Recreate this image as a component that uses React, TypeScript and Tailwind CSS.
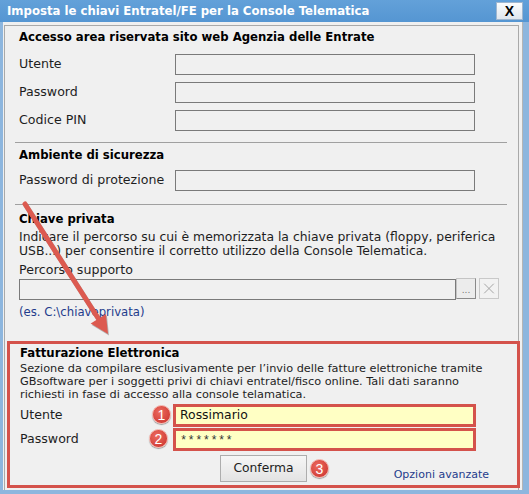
import { X } from 'lucide-react';

const labelText = 'text-[12.6px] text-[#1e1e1e]';
const heading = 'text-[11.7px] font-bold text-black';

function Badge({ n, className }: { n: number; className: string }) {
  return (
    <span
      className={`absolute flex h-[19px] w-[19px] items-center justify-center rounded-full border border-[#f3b0a8] bg-[radial-gradient(circle_at_40%_35%,#ec6a5e,#c9302c)] font-['Liberation_Sans',sans-serif] text-[14px] leading-none text-white shadow-[0_1px_1px_rgba(0,0,0,0.35)] ${className}`}
    >
      {n}
    </span>
  );
}

function FieldRow({ label }: { label: string }) {
  return (
    <div className="flex h-[21px] items-center">
      <span className={`w-[156px] ${labelText}`}>{label}</span>
      <div className="h-[21px] w-[300px] border border-[#7a7a7a] bg-[#f0f0f0]" />
    </div>
  );
}

export default function App() {
  return (
    <div className="relative h-[494px] w-[529px] overflow-hidden bg-[#8db6de] font-['DejaVu_Sans',sans-serif]">
      {/* title bar */}
      <div className="flex h-[22px] items-center justify-between bg-[linear-gradient(#63a1d9,#5596d2)] pl-[7px] pr-[6px]">
        <span className="font-['DejaVu_Sans_Condensed','DejaVu_Sans',sans-serif] text-[13px] font-bold text-white">
          Imposta le chiavi Entratel/FE per la Console Telematica
        </span>
        <button
          type="button"
          className="flex h-[18px] w-[27px] items-center justify-center border border-[#9fb6cf] bg-[linear-gradient(#fbfcfd,#dfe6ee)] font-['Liberation_Sans',sans-serif] text-[14px] font-bold text-black"
        >
          X
        </button>
      </div>

      {/* window body */}
      <div className="ml-[3px] mr-[6px] h-[468px] border-r border-[#b5b5b5] bg-[#f0f0f0] pt-[3px]">
        <div className="ml-[1px] mr-[3px] h-[465px] border-l border-r border-t border-[#a9a9a9] pl-[14px]">
          <div className={`mt-[2px] flex h-[20px] items-center ${heading}`}>
            Accesso area riservata sito web Agenzia delle Entrate
          </div>
          <div className="mt-[6px] flex flex-col gap-[7px]">
            <FieldRow label="Utente" />
            <FieldRow label="Password" />
            <FieldRow label="Codice PIN" />
          </div>

          <div className="-ml-[4px] mt-[11px] h-px w-[492px] bg-[#a0a0a0]" />
          <div className={`mt-[3px] flex h-[20px] items-center ${heading}`}>
            Ambiente di sicurezza
          </div>
          <div className="mt-[4px]">
            <FieldRow label="Password di protezione" />
          </div>

          <div className="-ml-[4px] mt-[13px] h-px w-[492px] bg-[#a0a0a0]" />
          <div className={`mt-[5px] flex h-[20px] items-center ${heading}`}>
            Chiave privata
          </div>
          <p className="whitespace-nowrap text-[12.4px] leading-[14px] text-[#1e1e1e]">
            Indicare il percorso su cui è memorizzata la chiave privata (floppy, periferica
            <br />
            USB...) per consentire il corretto utilizzo della Console Telematica.
          </p>
          <div className={`mt-[5px] leading-[14px] ${labelText}`}>Percorso supporto</div>
          <div className="mt-[2px] flex items-start">
            <div className="h-[21px] w-[437px] border border-[#7a7a7a] bg-[#f0f0f0]" />
            <button
              type="button"
              className="-mt-px flex h-[21px] w-[20px] items-end justify-center border border-[#c4c4c4] border-b-[#8a8a8a] border-r-[#8a8a8a] bg-[#ececec] pb-[3px] text-[9px] leading-none text-[#777]"
            >
              ...
            </button>
            <button
              type="button"
              className="-mt-px ml-[3px] flex h-[21px] w-[20px] items-center justify-center border border-[#c9c9c9] bg-[#f2f2f2] text-[#a3a3a3]"
            >
              <X className="h-[19px] w-[19px]" strokeWidth={1.3} />
            </button>
          </div>
          <div className="mt-[5px] text-[11.7px] leading-[14px] text-[#1f3c8c]">
            (es. C:\chiaveprivata)
          </div>

          {/* Fatturazione Elettronica */}
          <div className="-ml-[12px] mt-[22px] h-[147px] w-[513px] border-[3px] border-[#d4524b] pl-[10px] pr-[28px]">
            <div className={`mt-[2px] flex h-[16px] items-center ${heading}`}>
              Fatturazione Elettronica
            </div>
            <p className="whitespace-nowrap text-[11.3px] leading-[13px] text-[#1e1e1e]">
              Sezione da compilare esclusivamente per l’invio delle fatture elettroniche tramite
              <br />
              GBsoftware per i soggetti privi di chiavi entratel/fisco online. Tali dati saranno
              <br />
              richiesti in fase di accesso alla console telamatica.
            </p>
            <div className="relative mt-[3px] flex h-[23px] items-center">
              <span className={`w-[153px] ${labelText}`}>Utente</span>
              <div className="flex h-[23px] w-[303px] items-center border-[3px] border-[#d4524b] bg-[#ffffc4] pl-[4px] text-[12.4px] text-[#111]">
                Rossimario
              </div>
              <Badge n={1} className="left-[132px] top-[1px]" />
            </div>
            <div className="relative mt-px flex h-[23px] items-center">
              <span className={`w-[153px] ${labelText}`}>Password</span>
              <div className="flex h-[23px] w-[303px] items-center border-[3px] border-[#d4524b] bg-[#ffffc4] pl-[4px] pt-[3px] font-['Liberation_Mono',monospace] text-[12px] tracking-[0.4px] text-[#333]">
                *******
              </div>
              <Badge n={2} className="left-[129px] top-[1px]" />
            </div>
            <div className="relative mt-[4px] flex items-end">
              <button
                type="button"
                className="ml-[200px] h-[27px] w-[87px] border border-[#adadad] bg-[linear-gradient(#f6f6f6,#e3e3e3)] text-[12.3px] text-[#1e1e1e]"
              >
                Conferma
              </button>
              <Badge n={3} className="left-[290px] top-[4px]" />
              <span className="mb-[-1px] ml-auto text-[11px] text-[#1f3c8c]">Opzioni avanzate</span>
            </div>
          </div>
        </div>
      </div>

      {/* annotation arrow */}
      <svg
        className="pointer-events-none absolute left-0 top-0"
        width="529"
        height="494"
        viewBox="0 0 529 494"
      >
        <g opacity="0.25" transform="translate(1 1.5)">
          <line x1="25" y1="204" x2="98" y2="318" stroke="#000" strokeWidth="5" strokeLinecap="round" />
          <polygon points="108,334 90.7,323.6 105.9,314" fill="#000" />
        </g>
        <line x1="25" y1="204" x2="98" y2="318" stroke="#dc5a50" strokeWidth="5" strokeLinecap="round" />
        <polygon points="108,334 90.7,323.6 105.9,314" fill="#dc5a50" />
      </svg>
    </div>
  );
}
